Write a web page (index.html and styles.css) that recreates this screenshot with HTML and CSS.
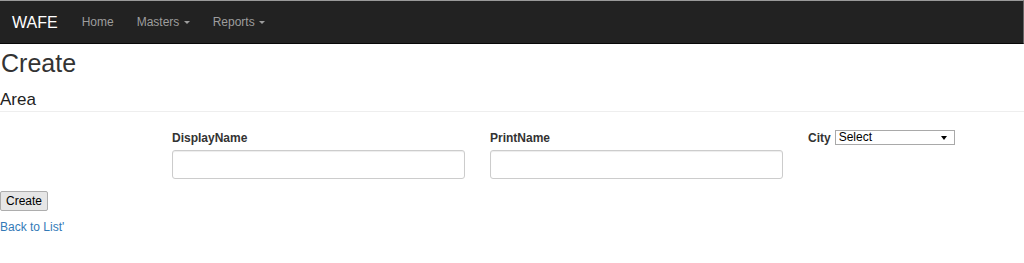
FILE: index.html
```html
<!DOCTYPE html>
<html lang="en">
<head>
    <meta charset="UTF-8">
    <meta name="viewport" content="width=device-width, initial-scale=1.0">
    <title>Create - WAFE</title>
    <link rel="stylesheet" href="styles.css">
</head>
<body>
    <nav class="navbar">
        <a class="brand" href="#">WAFE</a>
        <ul class="nav-links">
            <li><a href="#">Home</a></li>
            <li><a href="#">Masters <span class="caret"></span></a></li>
            <li><a href="#">Reports <span class="caret"></span></a></li>
        </ul>
    </nav>

    <div class="page">
        <h2 class="page-title">Create</h2>
        <h4 class="section-title">Area</h4>
        <hr class="divider">

        <form class="area-form">
            <div class="field-row">
                <div class="field">
                    <label for="displayName">DisplayName</label>
                    <input type="text" id="displayName" class="text-input">
                </div>
                <div class="field">
                    <label for="printName">PrintName</label>
                    <input type="text" id="printName" class="text-input">
                </div>
                <div class="field field-inline">
                    <label for="city">City</label>
                    <span class="select-wrap">
                        <select id="city" class="city-select">
                            <option>Select</option>
                        </select>
                    </span>
                </div>
            </div>
            <button type="button" class="create-btn">Create</button>
        </form>

        <a class="back-link" href="#">Back to List'</a>
    </div>
</body>
</html>
```

FILE: styles.css
```css
* {
    margin: 0;
    padding: 0;
    box-sizing: border-box;
}

body {
    font-family: "Liberation Sans", Arial, sans-serif;
    font-size: 12px;
    color: #333;
    background-color: #fff;
}

/* Navbar */
.navbar {
    display: flex;
    align-items: center;
    gap: 24px;
    height: 44px;
    padding-left: 12px;
    background-color: #222;
    border-top: 1px solid #9a9a9a;
    border-bottom: 1px solid #080808;
    border-right: 1px solid #666;
}

.brand {
    color: #fff;
    font-size: 16px;
    text-decoration: none;
    margin-top: 1px;
}

.nav-links {
    display: flex;
    list-style: none;
    gap: 23px;
}

.nav-links a {
    display: block;
    color: #9d9d9d;
    text-decoration: none;
    font-size: 12px;
}

.caret {
    display: inline-block;
    width: 0;
    height: 0;
    margin-left: 1px;
    vertical-align: middle;
    border-top: 3px solid #9d9d9d;
    border-left: 3px solid transparent;
    border-right: 3px solid transparent;
}

/* Page */
.page-title {
    font-size: 25px;
    font-weight: normal;
    line-height: 1.1;
    margin-top: 6px;
    padding-left: 1px;
}

.section-title {
    font-size: 17px;
    font-weight: normal;
    line-height: 1.1;
    margin-top: 13px;
    color: #222;
}

.divider {
    border: 0;
    border-top: 1px solid #eee;
    margin-top: 2px;
}

/* Form */
.area-form {
    padding-top: 19px;
}

.field-row {
    display: grid;
    grid-template-columns: 293px 293px auto;
    column-gap: 25px;
    margin-left: 172px;
}

.field label {
    display: block;
    font-weight: bold;
    margin-bottom: 5px;
    color: #333;
}

.text-input {
    display: block;
    width: 100%;
    height: 29px;
    border: 1px solid #ccc;
    border-radius: 3px;
    box-shadow: inset 0 1px 1px rgba(0, 0, 0, 0.075);
}

.field-inline {
    display: flex;
    align-items: flex-start;
    gap: 4px;
}

.field-inline label {
    display: inline;
    margin-bottom: 0;
    line-height: 15px;
}

.select-wrap {
    position: relative;
    display: inline-block;
    margin-top: -1px;
}

.select-wrap::after {
    content: "";
    position: absolute;
    right: 8px;
    top: 6px;
    border-top: 4px solid #000;
    border-left: 3px solid transparent;
    border-right: 3px solid transparent;
    pointer-events: none;
}

.city-select {
    display: block;
    width: 120px;
    height: 15px;
    padding: 0 3px;
    font-family: "Liberation Sans", Arial, sans-serif;
    font-size: 12px;
    line-height: 13px;
    color: #000;
    border: 1px solid #a9a9a9;
    border-radius: 0;
    background-color: #fff;
    appearance: none;
    -webkit-appearance: none;
}

.create-btn {
    display: block;
    margin-top: 12px;
    height: 20px;
    padding: 0 5px;
    font-family: "Liberation Sans", Arial, sans-serif;
    font-size: 12px;
    color: #000;
    background-color: #e6e6e6;
    border: 1px solid #adadad;
    border-radius: 2px;
}

.back-link {
    display: inline-block;
    margin-top: 9px;
    color: #337ab7;
    text-decoration: none;
    font-size: 12px;
}
```
